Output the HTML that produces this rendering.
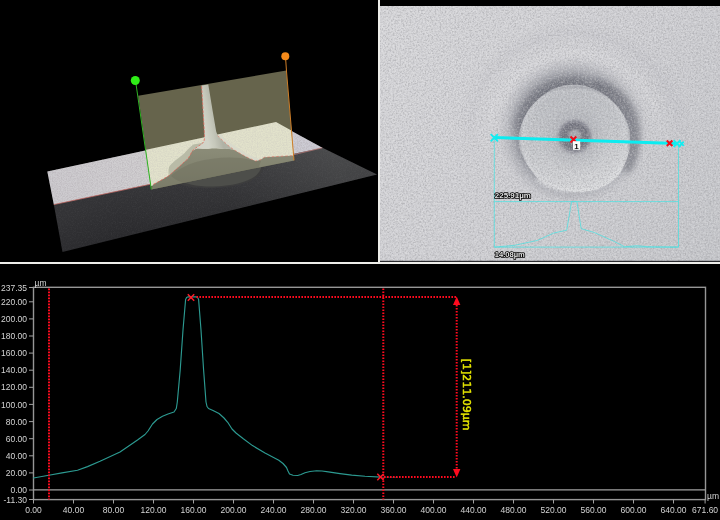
<!DOCTYPE html>
<html lang="en">
<head>
<meta charset="utf-8">
<title>Profile measurement</title>
<style>
  html, body { margin: 0; padding: 0; background: #000; }
  body { width: 720px; height: 520px; overflow: hidden; position: relative;
         font-family: "Liberation Sans", sans-serif; }
  .panel { position: absolute; overflow: hidden; background: #000; }
  #view3d { left: 0; top: 0; width: 378px; height: 262px; }
  #viewimg { left: 380px; top: 0; width: 340px; height: 262px; }
  #chart { left: 0; top: 264px; width: 720px; height: 256px; }
  .vsplit { position: absolute; left: 378px; top: 0; width: 2px; height: 263px; background: #eeeeea; }
  .hsplit { position: absolute; left: 0; top: 262px; width: 720px; height: 2px; background: #eeeeea; }
  svg { position: absolute; left: 0; top: 0; display: block; }
  svg text { opacity: 0.999; }
  .ax { font-family: "Liberation Sans", sans-serif; font-size: 8.5px; fill: #d4d4d4; }
  .meas { font-family: "Liberation Sans", sans-serif; font-size: 8px; font-weight: bold; fill: #e4e4e4;
          stroke: #000; stroke-width: 1.7px; paint-order: stroke; stroke-linejoin: round; }
</style>
</head>
<body>

<!-- ============ 3D view ============ -->
<div class="panel" id="view3d">
<svg width="378" height="262" viewBox="0 0 378 262">
  <defs>
    <linearGradient id="darkFloor" x1="190" y1="170" x2="212" y2="232" gradientUnits="userSpaceOnUse">
      <stop offset="0" stop-color="#333336"/>
      <stop offset="0.5" stop-color="#2c2c2f"/>
      <stop offset="1" stop-color="#232326"/>
    </linearGradient>
    <linearGradient id="lightFloor" x1="50" y1="185" x2="320" y2="135" gradientUnits="userSpaceOnUse">
      <stop offset="0" stop-color="#cdcbcf"/>
      <stop offset="0.5" stop-color="#d2d0d1"/>
      <stop offset="1" stop-color="#cccbd4"/>
    </linearGradient>
    <linearGradient id="spike" x1="201" y1="110" x2="215" y2="107" gradientUnits="userSpaceOnUse">
      <stop offset="0" stop-color="#d2d4c8"/>
      <stop offset="0.45" stop-color="#c6c8bb"/>
      <stop offset="1" stop-color="#b0b2a5"/>
    </linearGradient>
    <linearGradient id="cutface" x1="0" y1="148" x2="0" y2="188" gradientUnits="userSpaceOnUse">
      <stop offset="0" stop-color="#8b8c78"/>
      <stop offset="1" stop-color="#7b7c69"/>
    </linearGradient>
    <linearGradient id="floorLift" x1="120" y1="225" x2="330" y2="150" gradientUnits="userSpaceOnUse">
      <stop offset="0" stop-color="#9a9c9a" stop-opacity="0"/>
      <stop offset="0.5" stop-color="#9a9c9a" stop-opacity="0.07"/>
      <stop offset="1" stop-color="#9a9c9a" stop-opacity="0.26"/>
    </linearGradient>
    <filter id="grain3" x="0" y="0" width="100%" height="100%">
      <feTurbulence type="fractalNoise" baseFrequency="0.8" numOctaves="2" seed="11"/>
      <feColorMatrix type="matrix" values="0 0 0 0 0.45  0 0 0 0 0.42  0 0 0 0 0.45  1.5 1.5 1.5 0 -1.9"/>
    </filter>
    <filter id="grain3d" x="0" y="0" width="100%" height="100%">
      <feTurbulence type="fractalNoise" baseFrequency="0.8" numOctaves="2" seed="5"/>
      <feColorMatrix type="matrix" values="0 0 0 0 0.5  0 0 0 0 0.5  0 0 0 0 0.5  1.2 1.2 1.2 0 -1.6"/>
    </filter>
    <filter id="soft3"><feGaussianBlur stdDeviation="0.6"/></filter>
    <clipPath id="clipLight"><path d="M47.3 171.5 L276 122.4 L322.4 147.8 L53.8 204.5Z"/></clipPath>
    <clipPath id="clipDark"><path d="M53.8 204.5 L322.4 147.8 L377 174.5 L62.5 252Z"/></clipPath>
    <clipPath id="clipPlane"><path d="M138.2 95.7 L286.3 70.5 L294 160.4 L151.3 189.4Z"/></clipPath>
    <clipPath id="clipSurfP"><path d="M146 149.8 L276 122 L291.4 130.6 L293.5 156.6 L273 157.6 L265 158.6 L259 161.6 L250 160 L232 151 L196 151 L186 163 L171 176 L157 184 L150.9 186.2Z"/></clipPath>
  </defs>
  <!-- floor: dark (unscanned) part -->
  <path d="M53.8 204.5 L322.4 147.8 L377 174.5 L62.5 252Z" fill="url(#darkFloor)"/>
  <path d="M53.8 204.5 L322.4 147.8 L377 174.5 L62.5 252Z" fill="url(#floorLift)"/>
  <rect x="40" y="140" width="340" height="120" filter="url(#grain3d)" opacity="0.07" clip-path="url(#clipDark)"/>
  <!-- floor: scanned surface -->
  <path d="M47.3 171.5 L276 122.4 L322.4 147.8 L53.8 204.5Z" fill="url(#lightFloor)"/>
  <rect x="40" y="115" width="290" height="95" filter="url(#grain3)" opacity="0.5" clip-path="url(#clipLight)"/>
  <path d="M53.8 204.6 L294 154" stroke="#d2706a" stroke-width="0.7" fill="none"/>
  <path d="M294 154.6 L322.4 147.8" stroke="#e08a84" stroke-width="0.7" fill="none" opacity="0.8"/>
  <!-- bump foot in front of the section plane (in shadow on the dark floor) -->
  <path d="M172 179 C178 186 196 188.6 214 188 C234 187.4 250 183 258 177 C263 173 265 168 264 163 L200 170Z" fill="#3c3c3e" filter="url(#soft3)"/>
  <path d="M176 178 C183 184 198 186.8 213 186.6 C231 186.2 247 182 255.5 176 C260 172 262 167 262 163 L200 170Z" fill="#4d4e4a"/>
  <!-- section plane -->
  <path d="M138.2 95.7 L286.3 70.5 L294 160.4 L151.3 189.4Z" fill="#66644c"/>
  <g clip-path="url(#clipPlane)">
    <!-- scanned surface seen through the plane -->
    <path d="M138 151.5 L276 122 L296 133 L296 156.6 L273 157.6 L265 158.6 L259 161.6 L250 160 L232 151 L196 151 L186 163 L171 176 L157 184 L150 186.4 L140 186Z" fill="#e2e2cb"/>
    <rect x="135" y="118" width="165" height="72" filter="url(#grain3)" opacity="0.2" clip-path="url(#clipSurfP)"/>
    <!-- front outline of dome seen through plane -->
    <path d="M168.5 169 C166.5 174 169 178.5 176 181.5 L196 176 L230 160 L200 150 Z" fill="#cdcfb8"/>
    <!-- dome behind the plane (band left of profile) -->
    <path d="M204.4 141 C202 143.4 197 144 193.3 144.4 C189 148 186 151 184.4 153.3 C180 157 176 160 173.3 162.2
             C170 165 168.5 167 168.9 169 C169 172 169.5 174 170.5 176 L190 160Z" fill="#b9bba7"/>
    <!-- cut face -->
    <path d="M195.6 149 C200 147.5 204 149.5 210 148.6 C216 147.6 222 149.6 227 148.8 L233.5 149.5 C238 152 244 156 251 159
             L255.6 161 L261 159.6 L264.4 157.3 L273.3 156.7 L294 155.6 L296 162 L150 194 L153.3 184.4
             C160 181 165 178 168.9 175.6 C172 173 175 170 177.8 167.8 C182 164 185 161 187.8 158.9 C190 156 191 153 192.2 151Z" fill="url(#cutface)"/>
    <path d="M171 176 C178 183 194 187 213 186.6 C231 186.2 247 182 255.5 176 L261 161 L251 160 C236 156 214 157 196 162 C186 165 177 170 171 176Z" fill="#6e6f5d" opacity="0.45"/>
    <!-- spike and its flare -->
    <path d="M201.5 85.6 L208.3 84.5 L212.5 110 L216.2 131.5 C217 133.6 217.4 134.8 217.8 135.6 C222 140 226 144 233.5 149.5
             L227 148.8 C222 149.6 216 147.6 210 148.6 C204 149.5 200 147.5 195.6 149 L192.2 151
             C196 147.6 199 145.6 201 144.5 C203.4 143 204.4 141 204.5 138 L204.3 131.5Z" fill="url(#spike)"/>
    <!-- lit far slope along right profile -->
    <path d="M217.8 135.6 C222 140 226 144 233.5 149.5 C238 152 244 156 251 159 L255.6 161 L261 159.6
             C252 157 244 152 237.8 148 C230 143 224 139 221 134Z" fill="#d9dacb"/>
  </g>
  <!-- profile trace (dashed red) -->
  <path d="M153.3 184.4 C160 181 165 178 168.9 175.6 C172 173 175 170 177.8 167.8 C182 164 185 161 187.8 158.9 C190 156 191 153 192.2 151
           C196 147.6 199 145.6 201 144.5 C203.4 143 204.4 141 204.5 138 L204.3 131.5 L201.6 85.8" fill="none" stroke="#e2685c" stroke-width="0.8" stroke-dasharray="2.5 1.5"/>
  <path d="M217.8 135.6 C222 140 226 144 233.5 149.5 C238 152 244 156 251 159 L255.6 161 L261 159.6 L264.4 157.3 L273.3 156.7 L294 155.6" fill="none" stroke="#e2685c" stroke-width="0.7" stroke-dasharray="2.5 2" opacity="0.8"/>
  <!-- handles -->
  <path d="M136 84 L151.3 189.4" stroke="#2fb423" stroke-width="1" fill="none"/>
  <path d="M285.6 58 L286.4 70 L294 160.4" stroke="#d07f28" stroke-width="1" fill="none"/>
  <circle cx="135.3" cy="80.5" r="4.5" fill="#2fee17"/>
  <circle cx="285.3" cy="56.3" r="4" fill="#f58a1a"/>

</svg>
</div>

<!-- ============ Microscope image ============ -->
<div class="panel" id="viewimg">
<svg width="340" height="262" viewBox="380 0 340 262">
  <defs>
    <linearGradient id="bgLight" x1="400" y1="10" x2="700" y2="260" gradientUnits="userSpaceOnUse">
      <stop offset="0" stop-color="#d6d6d9"/>
      <stop offset="0.5" stop-color="#cfcfd3"/>
      <stop offset="1" stop-color="#c5c6ca"/>
    </linearGradient>
    <radialGradient id="halo" cx="0.5" cy="0.5" r="0.5">
      <stop offset="0" stop-color="#74767f" stop-opacity="1"/>
      <stop offset="0.62" stop-color="#74767f" stop-opacity="1"/>
      <stop offset="0.70" stop-color="#7c7e87" stop-opacity="0.85"/>
      <stop offset="0.78" stop-color="#888a93" stop-opacity="0.6"/>
      <stop offset="0.86" stop-color="#989aa2" stop-opacity="0.36"/>
      <stop offset="0.94" stop-color="#adaeb5" stop-opacity="0.14"/>
      <stop offset="1" stop-color="#c4c4ca" stop-opacity="0"/>
    </radialGradient>
    <linearGradient id="ringFade" x1="0" y1="20" x2="0" y2="200" gradientUnits="userSpaceOnUse">
      <stop offset="0" stop-color="#fff"/>
      <stop offset="0.45" stop-color="#fff"/>
      <stop offset="0.8" stop-color="#000"/>
    </linearGradient>
    <mask id="ringMask" maskUnits="userSpaceOnUse" x="380" y="0" width="340" height="262">
      <rect x="380" y="0" width="340" height="262" fill="url(#ringFade)"/>
    </mask>
    <radialGradient id="ring" cx="574" cy="139" r="125" gradientUnits="userSpaceOnUse">
      <stop offset="0.60" stop-color="#ececee" stop-opacity="0"/>
      <stop offset="0.70" stop-color="#ececee" stop-opacity="0.3"/>
      <stop offset="0.77" stop-color="#c8c8cc" stop-opacity="0.05"/>
      <stop offset="0.84" stop-color="#9c9ca6" stop-opacity="0.2"/>
      <stop offset="0.95" stop-color="#9c9ca6" stop-opacity="0"/>
    </radialGradient>
    <linearGradient id="bump" x1="560" y1="86" x2="585" y2="194" gradientUnits="userSpaceOnUse">
      <stop offset="0" stop-color="#b9bbc0"/>
      <stop offset="0.45" stop-color="#c3c5c9"/>
      <stop offset="0.8" stop-color="#cfd0d3"/>
      <stop offset="1" stop-color="#d6d7d9"/>
    </linearGradient>
    <radialGradient id="dish" cx="574.6" cy="137" r="58" gradientUnits="userSpaceOnUse">
      <stop offset="0" stop-color="#9fa1a8" stop-opacity="0.55"/>
      <stop offset="0.35" stop-color="#a6a8af" stop-opacity="0.45"/>
      <stop offset="0.55" stop-color="#b4b6bb" stop-opacity="0.2"/>
      <stop offset="0.75" stop-color="#d4d5d8" stop-opacity="0"/>
      <stop offset="0.92" stop-color="#e2e3e5" stop-opacity="0.35"/>
      <stop offset="1" stop-color="#c8c9cd" stop-opacity="0.2"/>
    </radialGradient>
    <clipPath id="bumpClip"><path d="M575.8 84.8 Q590 85.6 601.2 92.7 Q611 98.6 618.5 107.7 Q626.6 117.6 629.4 129.6 Q631 141 628.9 151.6
           Q625.6 166 617.4 177 Q604 189.6 586.2 191.6 Q566 193.4 548.1 186.6 Q538 181 531.9 171.2 Q523 160 519.2 147
           Q517.6 135 521.5 123.9 Q526 111 535.4 101.9 Q543 94 552.7 89.2 Q563 84.8 575.8 84.8Z"/></clipPath>
    <radialGradient id="pit" cx="574.6" cy="136.8" r="20" fx="575" fy="134.8" gradientUnits="userSpaceOnUse">
      <stop offset="0" stop-color="#aaabb1"/>
      <stop offset="0.22" stop-color="#a2a3aa"/>
      <stop offset="0.36" stop-color="#74757f"/>
      <stop offset="0.62" stop-color="#70717c"/>
      <stop offset="0.78" stop-color="#8d8e98"/>
      <stop offset="0.9" stop-color="#aaabb2" stop-opacity="0.65"/>
      <stop offset="1" stop-color="#c0c2c6" stop-opacity="0"/>
    </radialGradient>
    <filter id="grain" x="0" y="0" width="100%" height="100%">
      <feTurbulence type="fractalNoise" baseFrequency="0.6" numOctaves="2" seed="7" result="n"/>
      <feColorMatrix type="matrix" values="0 0 0 0 0.35  0 0 0 0 0.35  0 0 0 0 0.37  1.8 1.8 1.8 0 -2.45"/>
      <feGaussianBlur stdDeviation="0.45"/>
    </filter>
    <filter id="grainL" x="0" y="0" width="100%" height="100%">
      <feTurbulence type="fractalNoise" baseFrequency="0.55" numOctaves="2" seed="23" result="n"/>
      <feColorMatrix type="matrix" values="0 0 0 0 1  0 0 0 0 1  0 0 0 0 1  1.8 1.8 1.8 0 -2.5"/>
      <feGaussianBlur stdDeviation="0.45"/>
    </filter>
    <filter id="soft"><feGaussianBlur stdDeviation="1.2"/></filter>
    <filter id="soft4" x="-20%" y="-20%" width="140%" height="140%"><feGaussianBlur stdDeviation="3"/></filter>
  </defs>
  <!-- sample surface -->
  <rect x="380" y="6" width="340" height="256" fill="url(#bgLight)"/>
  <circle cx="574" cy="139" r="125" fill="url(#ring)" mask="url(#ringMask)" opacity="0.6"/>
  <ellipse cx="572.5" cy="131" rx="77" ry="76" fill="url(#halo)"/>
  <path d="M596 84 C612 88 626 100 632 116 C637 132 636 152 628 168" fill="none" stroke="#5f616b" stroke-width="9" stroke-linecap="round" opacity="0.62" filter="url(#soft4)"/>
  <path d="M518 128 C521 110 531 96 546 88 C556 83 568 81 580 82" fill="none" stroke="#676973" stroke-width="8" stroke-linecap="round" opacity="0.5" filter="url(#soft4)"/>
  <!-- bump -->
  <path id="bumpshape" d="M575.8 84.8 Q590 85.6 601.2 92.7 Q611 98.6 618.5 107.7 Q626.6 117.6 629.4 129.6 Q631 141 628.9 151.6
           Q625.6 166 617.4 177 Q604 189.6 586.2 191.6 Q566 193.4 548.1 186.6 Q538 181 531.9 171.2 Q523 160 519.2 147
           Q517.6 135 521.5 123.9 Q526 111 535.4 101.9 Q543 94 552.7 89.2 Q563 84.8 575.8 84.8Z" fill="url(#bump)"/>
  <circle cx="574.6" cy="137" r="58" fill="url(#dish)" clip-path="url(#bumpClip)"/>
  <path d="M621 168 C614 181 598 191.5 577 191.5 C560 192 546 188 536 179" fill="none" stroke="#e2e3e5" stroke-width="2.2" opacity="0.8" filter="url(#soft)"/>
  <path d="M523 160 C518 146 518 128 525 113 C532 99 548 88 570 87 C592 86 610 94 620 107 C628 118 631 134 629 150" fill="none" stroke="#6e707a" stroke-width="1.6" opacity="0.55" filter="url(#soft)"/>
  <circle cx="574.6" cy="136.8" r="20" fill="url(#pit)"/>
  <rect x="380" y="6" width="340" height="256" filter="url(#grain)" opacity="0.5"/>
  <rect x="380" y="6" width="340" height="256" filter="url(#grainL)" opacity="0.22"/>
  <rect x="380" y="260.8" width="340" height="1.2" fill="#2a2a2e"/>
  <!-- measurement overlay -->
  <g fill="none" stroke="#3fe3e3" stroke-width="0.8" opacity="0.85">
    <path d="M494.3 138V247.1H678.5V144"/>
    <path d="M494.3 201.6H678.5"/>
    <path d="M494.3 247.1 L514.2 245.4 L537.5 240.4 L553.5 233.1 L566.7 230.2 L571.6 201.6 L576.9 201.6 L581.2 228.7
             L594.4 232.5 L613.3 241 L622 245.4 L624.4 246.8 L636.7 245.7 L648.3 246.8 L678.5 247.1"/>
  </g>
  <path d="M494 137.5L677 143.5" stroke="#0cecf0" stroke-width="2.9" fill="none"/>
  <path d="M490.7 134.1l7.2 7.2m0 -7.2l-7.2 7.2 M673.6 140.2l6.8 6.8m0 -6.8l-6.8 6.8 M679.6 141.6l4.2 4.2m0 -4.2l-4.2 4.2" stroke="#14ecf0" stroke-width="1.9" fill="none"/>
  <path d="M570.5 136.6l5.8 5.8m0 -5.8l-5.8 5.8 M666.8 140.4l5.6 5.6m0 -5.6l-5.6 5.6" stroke="#f00f1a" stroke-width="2.1" fill="none"/>
  <rect x="573" y="141.2" width="7.2" height="8.6" fill="#fafafa"/>
  <text x="576.6" y="148.6" text-anchor="middle" font-family="Liberation Sans, sans-serif" font-size="8" font-weight="bold" fill="#111">1</text>
  <text class="meas" x="494.8" y="198.3" textLength="36" lengthAdjust="spacingAndGlyphs">225.91µm</text>
  <text class="meas" x="494.8" y="257.4" textLength="30" lengthAdjust="spacingAndGlyphs">14.08µm</text>

</svg>
</div>

<div class="vsplit"></div>
<div class="hsplit"></div>

<!-- ============ Profile chart ============ -->
<div class="panel" id="chart">
<svg width="720" height="256" viewBox="0 264 720 256">
  <rect x="33.5" y="287.3" width="672.0" height="212.3" fill="none" stroke="#969696" stroke-width="1.4"/>
  <line x1="33.5" y1="489.8" x2="705.5" y2="489.8" stroke="#a0a0a0" stroke-width="1.2"/>
  <text class="ax" x="27" y="290.6" text-anchor="end">237.35</text>
  <text class="ax" x="27" y="304.9" text-anchor="end">220.00</text>
  <text class="ax" x="27" y="322.0" text-anchor="end">200.00</text>
  <text class="ax" x="27" y="339.1" text-anchor="end">180.00</text>
  <text class="ax" x="27" y="356.2" text-anchor="end">160.00</text>
  <text class="ax" x="27" y="373.3" text-anchor="end">140.00</text>
  <text class="ax" x="27" y="390.4" text-anchor="end">120.00</text>
  <text class="ax" x="27" y="407.5" text-anchor="end">100.00</text>
  <text class="ax" x="27" y="424.7" text-anchor="end">80.00</text>
  <text class="ax" x="27" y="441.8" text-anchor="end">60.00</text>
  <text class="ax" x="27" y="458.9" text-anchor="end">40.00</text>
  <text class="ax" x="27" y="476.0" text-anchor="end">20.00</text>
  <text class="ax" x="27" y="493.1" text-anchor="end">0.00</text>
  <text class="ax" x="27" y="502.6" text-anchor="end">-11.30</text>
  <text class="ax" x="33.5" y="513.3" text-anchor="middle">0.00</text>
  <text class="ax" x="73.5" y="513.3" text-anchor="middle">40.00</text>
  <text class="ax" x="113.5" y="513.3" text-anchor="middle">80.00</text>
  <text class="ax" x="153.5" y="513.3" text-anchor="middle">120.00</text>
  <text class="ax" x="193.5" y="513.3" text-anchor="middle">160.00</text>
  <text class="ax" x="233.5" y="513.3" text-anchor="middle">200.00</text>
  <text class="ax" x="273.5" y="513.3" text-anchor="middle">240.00</text>
  <text class="ax" x="313.5" y="513.3" text-anchor="middle">280.00</text>
  <text class="ax" x="353.5" y="513.3" text-anchor="middle">320.00</text>
  <text class="ax" x="393.5" y="513.3" text-anchor="middle">360.00</text>
  <text class="ax" x="433.5" y="513.3" text-anchor="middle">400.00</text>
  <text class="ax" x="473.5" y="513.3" text-anchor="middle">440.00</text>
  <text class="ax" x="513.5" y="513.3" text-anchor="middle">480.00</text>
  <text class="ax" x="553.5" y="513.3" text-anchor="middle">520.00</text>
  <text class="ax" x="593.5" y="513.3" text-anchor="middle">560.00</text>
  <text class="ax" x="633.5" y="513.3" text-anchor="middle">600.00</text>
  <text class="ax" x="673.5" y="513.3" text-anchor="middle">640.00</text>
  <text class="ax" x="705.1" y="513.3" text-anchor="middle">671.60</text>
  <path d="M29.0 287.5H33.5M29.0 301.8H33.5M29.0 318.9H33.5M29.0 336.0H33.5M29.0 353.1H33.5M29.0 370.2H33.5M29.0 387.3H33.5M29.0 404.4H33.5M29.0 421.6H33.5M29.0 438.7H33.5M29.0 455.8H33.5M29.0 472.9H33.5M29.0 490.0H33.5M29.0 499.5H33.5M33.5 499.5V503.5M73.5 499.5V503.5M113.5 499.5V503.5M153.5 499.5V503.5M193.5 499.5V503.5M233.5 499.5V503.5M273.5 499.5V503.5M313.5 499.5V503.5M353.5 499.5V503.5M393.5 499.5V503.5M433.5 499.5V503.5M473.5 499.5V503.5M513.5 499.5V503.5M553.5 499.5V503.5M593.5 499.5V503.5M633.5 499.5V503.5M673.5 499.5V503.5M705.1 499.5V503.5" stroke="#a0a0a0" stroke-width="1" fill="none"/>
  <text class="ax" x="34.5" y="285.5">µm</text>
  <text class="ax" x="707" y="498.5">µm</text>
  <!-- profile curve -->
  <path id="profile" fill="none" stroke="#2c9a91" stroke-width="1.15" stroke-linejoin="round" stroke-linecap="round"
    d="M33.5 478 L48.8 475.2 L62 472.9 L77.5 470.2 L87.5 466.6 L100 461.3 L120 452 L137.5 440 L145 434.5 L148 431
       L152.5 424 L157 419.5 L162.5 416.3 L168 414 L174 412 L176.3 408.5 L177.3 402 L180.2 370 L183 330 L185.6 299.5
       L186.6 297.6 L188.2 296.8 L196 296.8 L197.6 297.6 L198.6 299.5 L201 330 L203.6 370 L206 402 L207 406.5
       L208.5 408.5 L213 410.5 L219 413.5 L224 418 L227.7 422.3 L232 429 L236 433 L243 438.5 L252.5 445.6
       L265 453 L278.8 460.2 L283 463.5 L286.5 467.5 L288 471 L289.5 474 L293 475.2 L297.7 475.5 L301 474.5
       L305 472.8 L310 471.5 L316.7 470.7 L322 471 L328.3 471.9 L340 473.6 L351.7 475.1 L365 476.3 L381 477.1"/>
  <path fill="none" stroke="#2e9e96" stroke-width="1" opacity="0.45" d="M381 477.1 L398 477.4"/>
  <!-- measurement cursors -->
  <g fill="none" stroke="#ff0a1e" stroke-width="2" stroke-dasharray="1.6 1.4">
    <path d="M49 288.6V499.5"/>
    <path d="M383.3 288.5V499.5"/>
    <path d="M196.4 297H456"/>
    <path d="M384 477H456"/>
    <path d="M456.7 305V470"/>
  </g>
  <path d="M456.7 296.5l3.7 8.5h-7.4z M456.7 477.5l3.7 -8.5h-7.4z" fill="#ff0a1e"/>
  <path d="M187.8 294.3l6.4 6.4m0 -6.4l-6.4 6.4 M377.3 473.8l6.4 6.4m0 -6.4l-6.4 6.4" stroke="#ff1a28" stroke-width="1.5" fill="none"/>
  <text transform="translate(463.3 358.8) rotate(90)" font-family="DejaVu Sans, Liberation Sans, sans-serif" font-size="11" fill="#e6e600" stroke="#e6e600" stroke-width="0.45" textLength="71.6" lengthAdjust="spacingAndGlyphs">[1]211.09µm</text>

</svg>
</div>

</body>
</html>
